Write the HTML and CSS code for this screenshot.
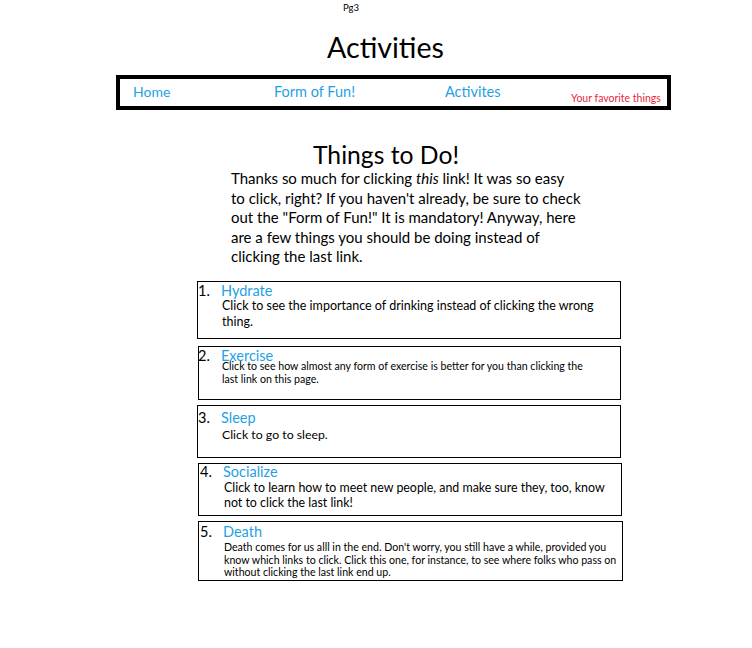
FILE: index.html
```html
<!DOCTYPE html>
<html lang="en">
<head>
<meta charset="utf-8">
<title>Activities</title>
<link rel="stylesheet" href="styles.css">
</head>
<body>
<p class="page-label">Pg3</p>
<h1 class="page-title">Activities</h1>
<nav class="nav">
  <a class="nav-link nav-home" href="#">Home</a>
  <a class="nav-link nav-form" href="#">Form of Fun!</a>
  <a class="nav-link nav-act" href="#">Activites</a>
  <span class="nav-tag">Your favorite things</span>
</nav>
<h2 class="section-title">Things to Do!</h2>
<p class="intro">Thanks so much for clicking <em>this</em> link! It was so easy<br>to click, right? If you haven't already, be sure to check<br>out the "Form of Fun!" It is mandatory! Anyway, here<br>are a few things you should be doing instead of<br>clicking the last link.</p>
<ol class="todo">
  <li class="item item-1">
    <div class="item-head"><span class="num">1.</span><a class="item-title" href="#">Hydrate</a></div>
    <p class="item-desc">Click to see the importance of drinking instead of clicking the wrong<br>thing.</p>
  </li>
  <li class="item item-2">
    <div class="item-head"><span class="num">2.</span><a class="item-title" href="#">Exercise</a></div>
    <p class="item-desc">Click to see how almost any form of exercise is better for you than clicking the<br>last link on this page.</p>
  </li>
  <li class="item item-3">
    <div class="item-head"><span class="num">3.</span><a class="item-title" href="#">Sleep</a></div>
    <p class="item-desc">Click to go to sleep.</p>
  </li>
  <li class="item item-4">
    <div class="item-head"><span class="num">4.</span><a class="item-title" href="#">Socialize</a></div>
    <p class="item-desc">Click to learn how to meet new people, and make sure they, too, know<br>not to click the last link!</p>
  </li>
  <li class="item item-5">
    <div class="item-head"><span class="num">5.</span><a class="item-title" href="#">Death</a></div>
    <p class="item-desc">Death comes for us alll in the end. Don't worry, you still have a while, provided you<br>know which links to click. Click this one, for instance, to see where folks who pass on<br>without clicking the last link end up.</p>
  </li>
</ol>
</body>
</html>
```
FILE: styles.css
```css
* { box-sizing: border-box; }

body {
  margin: 0;
  background: #ffffff;
  color: #000000;
  font-family: Lato, "Open Sans", sans-serif;
}

a { text-decoration: none; color: #1f9fe4; }

.page-label {
  margin: 0;
  padding: 2px 0 0 343px;
  font-size: 9.5px;
  line-height: 12px;
}

.page-title {
  margin: 16px 0 0 327px;
  font-size: 28.6px;
  font-weight: 400;
  line-height: 34px;
}

.nav {
  margin: 11px 0 0 116px;
  width: 555px;
  height: 35px;
  border: 4px solid #000000;
  display: grid;
  grid-template-columns: 141px 171px 126px 1fr;
  padding-left: 13px;
  align-items: center;
}

.nav-link {
  font-size: 14.5px;
  line-height: 16px;
  margin-top: -1px;
}

.nav-home { font-size: 14px; }

.nav-tag {
  color: #e8283c;
  font-size: 10.5px;
  line-height: 12px;
  align-self: end;
  padding-bottom: 2px;
}

.section-title {
  margin: 31px 0 0 313px;
  font-size: 24.7px;
  font-weight: 400;
  line-height: 28px;
}

.intro {
  margin: 0 0 0 231px;
  font-size: 15px;
  line-height: 19.5px;
}

.intro em { font-style: italic; }

.todo {
  list-style: none;
  margin: 14px 0 0 197px;
  padding: 0;
  width: 424px;
  display: flex;
  flex-direction: column;
}

.item {
  border: 1px solid #000000;
}

.item-head {
  display: flex;
  font-size: 14.5px;
  line-height: 16px;
}

.num { width: 23px; }

.item-desc {
  margin: 0;
  padding-left: 24px;
  white-space: nowrap;
}

.item-1 { height: 58px; padding-top: 1.5px; }
.item-1 .item-desc { font-size: 12.5px; line-height: 16px; margin-top: -1px; }

.item-2 { height: 54px; margin-top: 7px; margin-left: 1px; padding-top: 4.5px; }
.item-2 .item-head { margin-left: -1px; line-height: 9px; }
.item-2 .item-desc { font-size: 10.6px; line-height: 13px; margin-top: 0; padding-left: 23px; }

.item-3 { height: 53px; margin-top: 5px; padding-top: 4px; }
.item-3 .item-desc { font-size: 12.3px; line-height: 16px; margin-top: 1.2px; }

.item-4 { height: 53px; margin-top: 5px; margin-left: 1px; width: 424px; padding-top: 0.5px; }
.item-4 .item-head { padding-left: 1px; }
.item-4 .item-desc { font-size: 12.4px; line-height: 15px; margin-top: 0.3px; padding-left: 25px; }

.item-5 { height: 60px; margin-top: 5px; margin-left: 1px; width: 425px; padding-top: 2.5px; }
.item-5 .item-head { padding-left: 1px; }
.item-5 .item-desc { font-size: 10.6px; line-height: 12.7px; margin-top: 1px; padding-left: 25px; }
```
